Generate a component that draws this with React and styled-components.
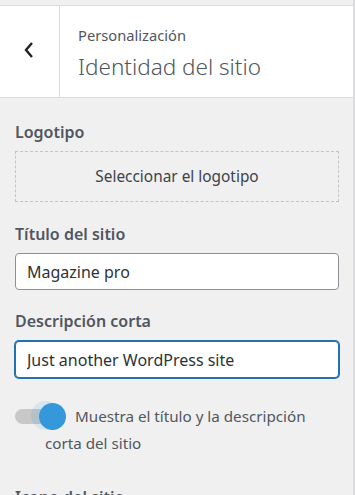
import React from 'react';
import styled, { createGlobalStyle } from 'styled-components';

const Global = createGlobalStyle`
    html, body {
        margin: 0;
        padding: 0;
        background: #f0f0f1;
        font-family: "Noto Sans", "Open Sans", sans-serif;
        color: #3c434a;
    }
`;

const Panel = styled.div`
    width: 355px;
    height: 495px;
    overflow: hidden;
    box-sizing: border-box;
    border-right: 2px solid #dcdcde;
    background: #f0f0f1;
`;

const TopStrip = styled.div`
    height: 5px;
    border-bottom: 1px solid #dcdcde;
`;

const Header = styled.div`
    display: flex;
    height: 91px;
    background: #fff;
    border-bottom: 1px solid #dcdcde;
`;

const BackButton = styled.button`
    width: 60px;
    flex: none;
    border: none;
    border-right: 1px solid #dcdcde;
    background: #fff;
    display: flex;
    align-items: center;
    justify-content: center;
    padding: 0 2px 4px 0;
    color: #1d2327;
`;

const HeaderText = styled.div`
    padding: 19px 18px 0;
    display: flex;
    flex-direction: column;
`;

const Crumb = styled.span`
    font-size: 14.7px;
    color: #50575e;
    line-height: 20px;
`;

const Title = styled.h1`
    margin: 7px 0 0;
    font-size: 22.5px;
    font-weight: 300;
    color: #50575e;
    line-height: 30px;
`;

const Content = styled.div`
    padding: 24px 16px 0 15px;
`;

const Label = styled.div`
    font-size: 16px;
    font-weight: 600;
    color: #50575e;
    line-height: 20px;
    margin-bottom: ${p => p.$gap || 10}px;
`;

const SelectBox = styled.button`
    display: block;
    width: 324px;
    height: 51px;
    border: 1px dashed #c3c4c7;
    background: transparent;
    font-family: inherit;
    font-size: 15.4px;
    color: #3c434a;
    margin-bottom: 22px;
`;

const Input = styled.input`
    display: block;
    box-sizing: border-box;
    width: 324px;
    height: 37px;
    padding: 0 11px;
    border-radius: 4px;
    border: 1px solid ${p => (p.$focus ? '#2271b1' : '#8c8f94')};
    box-shadow: ${p => (p.$focus ? '0 0 0 1px #2271b1' : 'none')};
    background: #fff;
    font-family: inherit;
    font-size: 16px;
    color: #2c3338;
    margin-bottom: ${p => p.$after || 21}px;
    outline: none;
`;

const ToggleRow = styled.div`
    padding-left: 30px;
    font-size: 15.2px;
    line-height: 27px;
    color: #50575e;
    padding-right: 16px;
`;

const Toggle = styled.span`
    display: inline-block;
    position: relative;
    width: 36px;
    height: 15px;
    margin-left: -30px;
    margin-right: 24px;
    vertical-align: -2px;
    border-radius: 8px;
    background: #c8c8c8;
`;

const Knob = styled.span`
    position: absolute;
    left: 24px;
    top: -6px;
    width: 27px;
    height: 27px;
    border-radius: 50%;
    background: #3498db;
    box-shadow: -7px -1px 0 1px rgba(52, 152, 219, 0.12);
`;

const NextLabel = styled(Label)`
    margin-top: 30px;
`;

export default function App() {
    return (
        <Panel>
            <Global />
            <TopStrip />
            <Header>
                <BackButton aria-label="Volver">
                    <svg width="12" height="18" viewBox="0 0 12 18">
                        <path d="M9 2 L3 9 L9 16" fill="none" stroke="#1d2327" strokeWidth="2.4" />
                    </svg>
                </BackButton>
                <HeaderText>
                    <Crumb>Personalización</Crumb>
                    <Title>Identidad del sitio</Title>
                </HeaderText>
            </Header>
            <Content>
                <Label $gap={9}>Logotipo</Label>
                <SelectBox>Seleccionar el logotipo</SelectBox>
                <Label $gap={9}>Título del sitio</Label>
                <Input defaultValue="Magazine pro" />
                <Label $gap={10}>Descripción corta</Label>
                <Input $focus $after={25} defaultValue="Just another WordPress site" />
                <ToggleRow>
                    <Toggle><Knob /></Toggle>
                    Muestra el título y la descripción corta del sitio
                </ToggleRow>
                <NextLabel>Icono del sitio</NextLabel>
            </Content>
        </Panel>
    );
}
